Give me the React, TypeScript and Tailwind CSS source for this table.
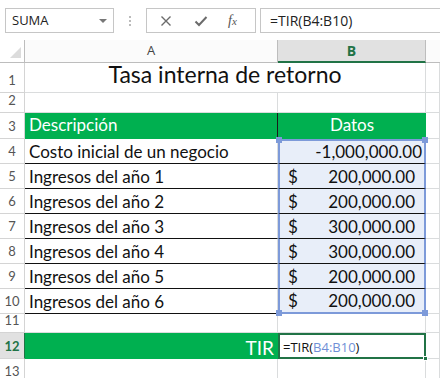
import React from 'react';

const rows = [
  { n: 4, label: 'Costo inicial de un negocio', value: '-1,000,000.00', dollar: false },
  { n: 5, label: 'Ingresos del año 1', value: '200,000.00', dollar: true },
  { n: 6, label: 'Ingresos del año 2', value: '200,000.00', dollar: true },
  { n: 7, label: 'Ingresos del año 3', value: '300,000.00', dollar: true },
  { n: 8, label: 'Ingresos del año 4', value: '300,000.00', dollar: true },
  { n: 9, label: 'Ingresos del año 5', value: '200,000.00', dollar: true },
  { n: 10, label: 'Ingresos del año 6', value: '200,000.00', dollar: true },
];

const RowHead = ({ n, active = false }: { n: number; active?: boolean }) => (
  <div
    className={`flex items-end justify-center pb-[2px] border-r border-b border-[#d4d4d4] text-[13px] ${
      active ? 'bg-[#e1e1e1] text-[#217346] font-bold border-r-[#217346]' : 'bg-white text-[#555]'
    }`}
  >
    {n}
  </div>
);

const Grid = ({ className = '' }: { className?: string }) => (
  <div className={`border-r border-b border-[#dadcdd] ${className}`} />
);

export default function App() {
  return (
    <div className="w-[440px] h-[378px] overflow-hidden bg-white font-['Lato',sans-serif]">
      {/* formula bar */}
      <div className="h-[40px] flex items-start pt-[8px] font-['Open_Sans',sans-serif]">
        <div className="ml-[5px] w-[109px] h-[25px] border border-[#c6c6c6] flex items-center justify-between pl-[6px] pr-[6px] text-[13px] text-[#222]">
          <span>SUMA</span>
          <span className="w-0 h-0 border-l-[4px] border-r-[4px] border-t-[4px] border-l-transparent border-r-transparent border-t-[#777]" />
        </div>
        <div className="w-[32px] h-[25px] flex flex-col items-center justify-center gap-[2px]">
          <span className="w-[2px] h-[2px] bg-[#bbb]" />
          <span className="w-[2px] h-[2px] bg-[#bbb]" />
          <span className="w-[2px] h-[2px] bg-[#bbb]" />
        </div>
        <div className="w-[110px] h-[25px] border border-[#c6c6c6] flex items-center text-[#666]">
          <svg width="12" height="12" viewBox="0 0 12 12" className="ml-[13px]">
            <path d="M1.5 1.5 L10.5 10.5 M10.5 1.5 L1.5 10.5" stroke="#6b6b6b" strokeWidth="1.4" />
          </svg>
          <svg width="14" height="12" viewBox="0 0 14 12" className="ml-[22px]">
            <path d="M1.5 6.5 L5 10 L12.5 2" stroke="#6b6b6b" strokeWidth="2" fill="none" />
          </svg>
          <span className="ml-[20px] font-['Liberation_Serif',serif] italic text-[14px] text-[#555]">
            f<span className="text-[11px]">x</span>
          </span>
        </div>
        <div className="ml-[4px] flex-1 h-[25px] border border-r-0 border-[#c6c6c6] flex items-center pl-[9px] text-[14px] text-[#222]">
          =TIR(B4:B10)
        </div>
      </div>

      {/* sheet */}
      <div className="grid grid-cols-[25px_253px_148px_1fr] grid-rows-[23px_30px_20px_26px_25px_25px_25px_25px_25px_25px_25px_19px_26px_25px]">
        {/* column headers */}
        <div className="relative border-r border-b border-[#bdbdbd] bg-white">
          <svg className="absolute right-[3px] bottom-[4px]" width="11" height="11" viewBox="0 0 11 11">
            <path d="M11 0 L11 11 L0 11 Z" fill="#dcdcdc" />
          </svg>
        </div>
        <div className="flex items-center justify-center border-r border-b border-[#bdbdbd] bg-[#fbfbfb] text-[13px] text-[#444] font-['Open_Sans',sans-serif]">
          A
        </div>
        <div className="flex items-center justify-center border-r border-[#bdbdbd] border-b-2 border-b-[#217346] bg-[#e1e1e1] text-[14px] font-bold text-[#217346] font-['Open_Sans',sans-serif]">
          B
        </div>
        <div className="border-b border-[#bdbdbd] bg-[#fbfbfb]" />

        {/* row 1 */}
        <RowHead n={1} />
        <div className="col-span-2 flex items-end justify-center pb-[1px] border-r border-b border-[#dadcdd] text-[23px] text-[#111]">
          Tasa interna de retorno
        </div>
        <Grid />

        {/* row 2 */}
        <RowHead n={2} />
        <Grid />
        <Grid />
        <Grid />

        {/* row 3 */}
        <RowHead n={3} />
        <div className="flex items-end pl-[4px] pb-[1px] bg-[#00b050] border-r border-[#1a1a1a] border-b border-b-[#00b050] text-[17px] text-white">
          Descripción
        </div>
        <div className="flex items-end justify-center pb-[1px] bg-[#00b050] border-b border-[#00b050] text-[17px] text-white">
          Datos
        </div>
        <Grid />

        {/* data rows */}
        {rows.map((r, i) => (
          <React.Fragment key={r.n}>
            <RowHead n={r.n} />
            <div className="flex items-end pl-[4px] pb-[1px] border-b border-[#111] border-r border-r-[#dadcdd] text-[17px] text-[#111] leading-none">
              <span className="pb-[2px]">{r.label}</span>
            </div>
            <div
              className={`relative flex items-end justify-between pl-[8px] bg-[#e8eef9] border-l-2 border-r-2 border-[#7d9ad9] text-[17px] text-[#111] leading-none ${
                r.dollar ? 'pr-[9px]' : 'pr-[2px]'
              } ${i === 0 ? 'border-t-2' : ''} ${i === rows.length - 1 ? 'border-b-2' : 'border-b border-b-[#111]'}`}
            >
              <span className="pb-[3px]">{r.dollar ? '$' : ''}</span>
              <span className="pb-[3px]">{r.value}</span>
              {i === 0 && (
                <>
                  <span className="absolute -left-[4px] -top-[4px] w-[6px] h-[6px] bg-[#7d9ad9]" />
                  <span className="absolute -right-[4px] -top-[4px] w-[6px] h-[6px] bg-[#7d9ad9]" />
                </>
              )}
              {i === rows.length - 1 && (
                <>
                  <span className="absolute -left-[4px] -bottom-[4px] w-[6px] h-[6px] bg-[#7d9ad9]" />
                  <span className="absolute -right-[4px] -bottom-[4px] w-[6px] h-[6px] bg-[#7d9ad9]" />
                </>
              )}
            </div>
            <Grid />
          </React.Fragment>
        ))}

        {/* row 11 */}
        <RowHead n={11} />
        <Grid />
        <Grid />
        <Grid />

        {/* row 12 */}
        <RowHead n={12} active />
        <div className="flex items-end justify-end pr-[4px] pb-[2px] bg-[#00b050] text-[19px] text-white leading-none">
          TIR
        </div>
        <div className="relative flex items-end pl-[3px] pb-[3px] border-2 border-[#217346] bg-white text-[13px] text-[#111] leading-none font-['Open_Sans',sans-serif]">
          =TIR(<span className="text-[#6f8fd6]">B4:B10</span>)
          <span className="absolute -right-[4px] -bottom-[4px] w-[5px] h-[5px] bg-[#217346] border border-white" />
        </div>
        <Grid />

        {/* row 13 */}
        <RowHead n={13} />
        <Grid />
        <Grid />
        <Grid />
      </div>
    </div>
  );
}
